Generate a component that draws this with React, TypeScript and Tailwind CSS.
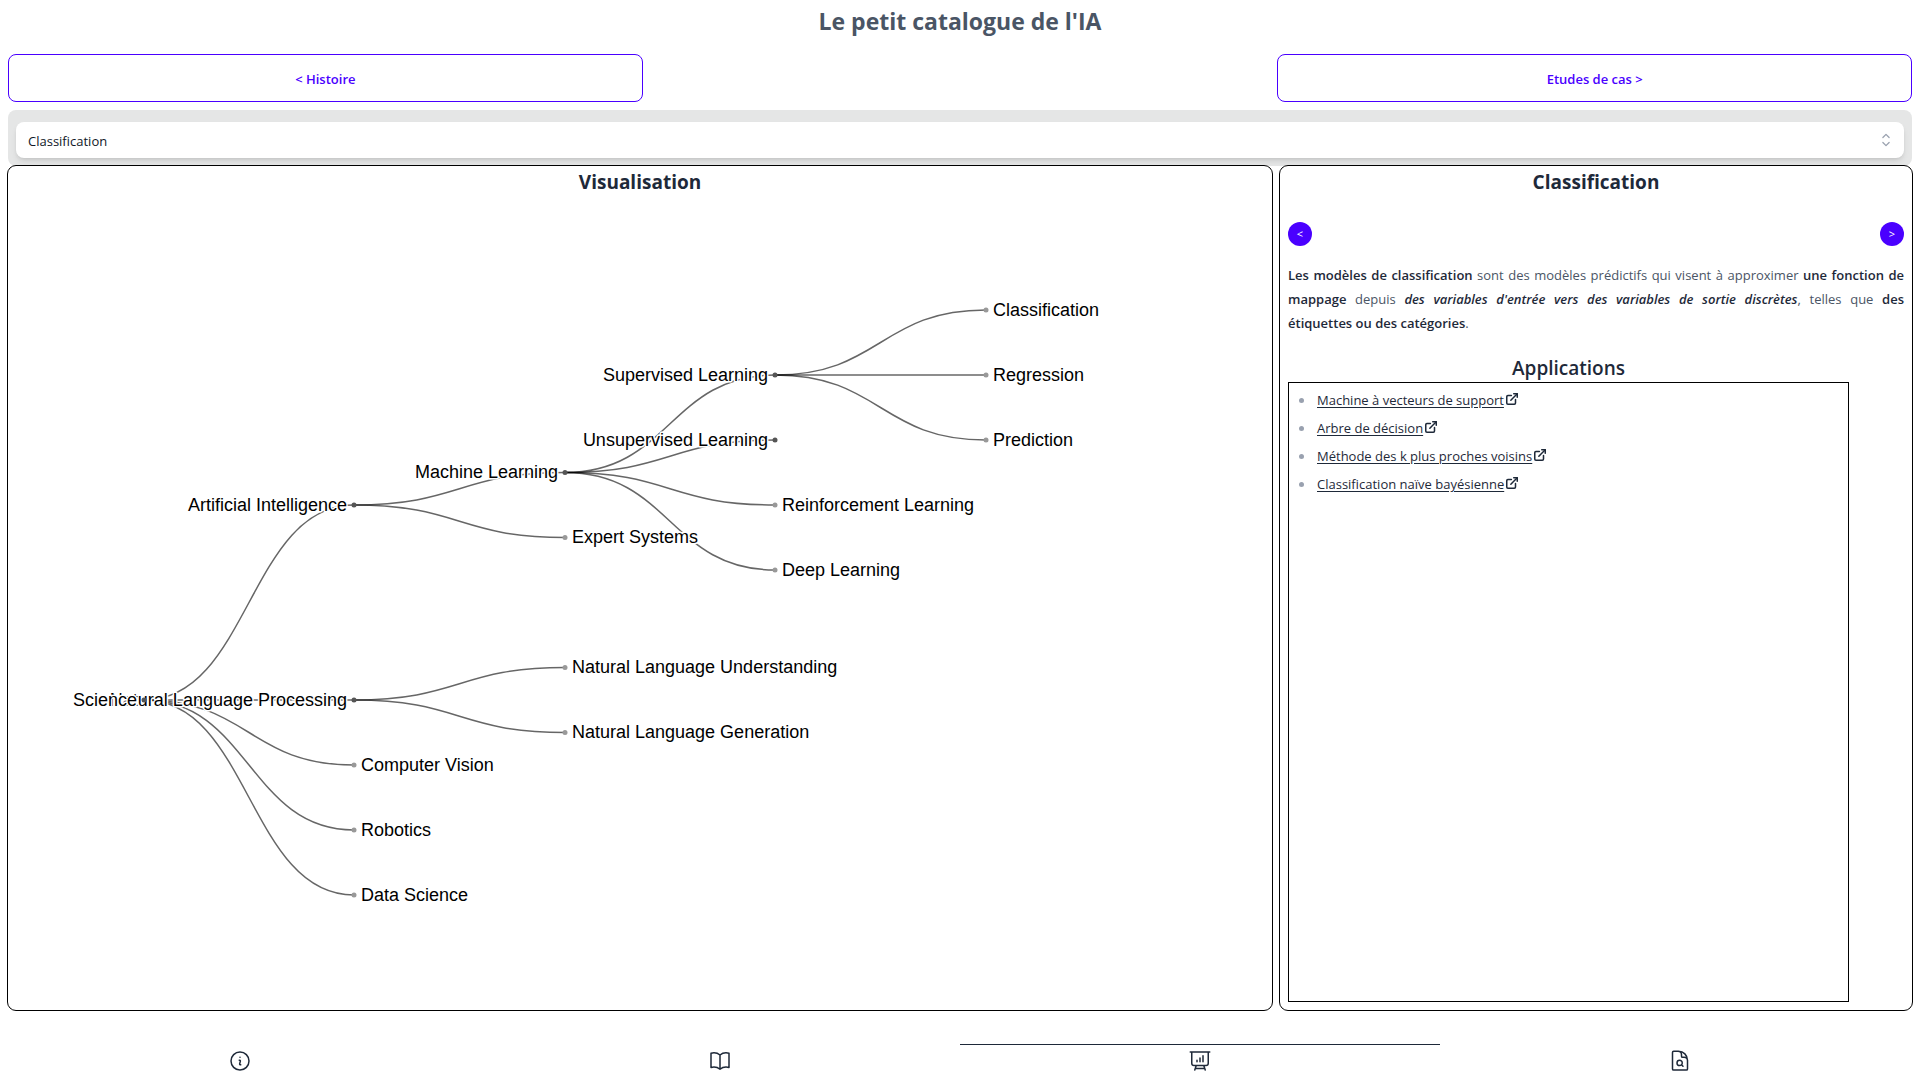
import React, { useState } from 'react';
import { ExternalLink } from 'lucide-react';
import {
  HiChevronUpDown,
  HiOutlineBookOpen,
  HiOutlineDocumentMagnifyingGlass,
  HiOutlineInformationCircle,
  HiOutlinePresentationChartBar,
} from 'react-icons/hi2';

type TreeNode = {
  id: string;
  label: string;
  x: number;
  y: number;
  parent?: string;
  branch?: boolean;
};

const COLUMNS = [136, 346, 557, 767, 978];

const NODES: TreeNode[] = [
  { id: 'root', label: 'Science', x: COLUMNS[0], y: 502, branch: true },
  { id: 'ai', label: 'Artificial Intelligence', x: COLUMNS[1], y: 307, parent: 'root', branch: true },
  { id: 'nlp', label: 'Natural Language Processing', x: COLUMNS[1], y: 502, parent: 'root', branch: true },
  { id: 'cv', label: 'Computer Vision', x: COLUMNS[1], y: 567, parent: 'root' },
  { id: 'robotics', label: 'Robotics', x: COLUMNS[1], y: 632, parent: 'root' },
  { id: 'data', label: 'Data Science', x: COLUMNS[1], y: 697, parent: 'root' },
  { id: 'ml', label: 'Machine Learning', x: COLUMNS[2], y: 274.5, parent: 'ai', branch: true },
  { id: 'expert', label: 'Expert Systems', x: COLUMNS[2], y: 339.5, parent: 'ai' },
  { id: 'nlu', label: 'Natural Language Understanding', x: COLUMNS[2], y: 469.5, parent: 'nlp' },
  { id: 'nlg', label: 'Natural Language Generation', x: COLUMNS[2], y: 534.5, parent: 'nlp' },
  { id: 'supervised', label: 'Supervised Learning', x: COLUMNS[3], y: 177, parent: 'ml', branch: true },
  { id: 'unsupervised', label: 'Unsupervised Learning', x: COLUMNS[3], y: 242, parent: 'ml', branch: true },
  { id: 'reinforcement', label: 'Reinforcement Learning', x: COLUMNS[3], y: 307, parent: 'ml' },
  { id: 'deep', label: 'Deep Learning', x: COLUMNS[3], y: 372, parent: 'ml' },
  { id: 'classification', label: 'Classification', x: COLUMNS[4], y: 112, parent: 'supervised' },
  { id: 'regression', label: 'Regression', x: COLUMNS[4], y: 177, parent: 'supervised' },
  { id: 'prediction', label: 'Prediction', x: COLUMNS[4], y: 242, parent: 'supervised' },
];

function linkPath(from: TreeNode, to: TreeNode) {
  const mid = (from.x + to.x) / 2;
  return `M${from.x},${from.y}C${mid},${from.y} ${mid},${to.y} ${to.x},${to.y}`;
}

function TopicTree() {
  const byId = new Map(NODES.map((n) => [n.id, n]));
  return (
    <svg
      viewBox="0 0 1264 812"
      className="h-0 w-full grow font-['Liberation_Sans',Arial,sans-serif] text-[18px]"
      role="img"
      aria-label="Arbre des domaines de l'IA"
    >
      <g fill="none" stroke="#000" strokeOpacity="0.6" strokeWidth="1.5">
        {NODES.filter((n) => n.parent).map((n) => (
          <path key={n.id} d={linkPath(byId.get(n.parent!)!, n)} />
        ))}
      </g>
      {[...NODES].reverse().map((n) => (
        <g key={n.id} transform={`translate(${n.x},${n.y})`}>
          <circle r="2.5" fill={n.branch ? '#555' : '#999'} />
          <text
            x={n.branch ? -7 : 7}
            dy="0.31em"
            textAnchor={n.branch ? 'end' : 'start'}
            fill="#000"
            stroke="#fff"
            strokeWidth="3"
            strokeLinejoin="round"
            paintOrder="stroke"
          >
            {n.label}
          </text>
        </g>
      ))}
    </svg>
  );
}

const TOPICS = ['Classification', 'Regression', 'Prediction', 'Reinforcement Learning', 'Deep Learning'];

const APPLICATIONS = [
  'Machine à vecteurs de support',
  'Arbre de décision',
  'Méthode des k plus proches voisins',
  'Classification naïve bayésienne',
];

const TABS = [
  { label: 'Informations', Icon: HiOutlineInformationCircle },
  { label: 'Histoire', Icon: HiOutlineBookOpen },
  { label: 'Visualisation', Icon: HiOutlinePresentationChartBar },
  { label: 'Etudes de cas', Icon: HiOutlineDocumentMagnifyingGlass },
];

const outlineButton =
  'h-12 rounded-lg border border-[#4a00ff] pt-1 text-[13px] font-semibold text-[#4a00ff]';
const roundButton =
  'flex size-6 items-center justify-center rounded-full bg-[#4a00ff] text-[11px] text-white';
const panel = 'flex flex-col rounded-lg outline outline-1 outline-black bg-white';

export default function App() {
  const [topic, setTopic] = useState('Classification');
  const [tab, setTab] = useState(2);

  return (
    <div className="flex min-h-screen flex-col bg-white font-['Open_Sans','Noto_Sans',sans-serif] text-gray-800">
      <h1 className="pt-[5px] pb-[9px] text-center text-[23px] leading-8 font-bold text-gray-600">
        Le petit catalogue de l'IA
      </h1>

      <div className="grid grid-cols-3 p-2">
        <button type="button" className={outlineButton}>
          &lt; Histoire
        </button>
        <button type="button" className={`${outlineButton} col-start-3`}>
          Etudes de cas &gt;
        </button>
      </div>

      <div className="mx-2 rounded-lg bg-[#e5e6e6] px-2 pt-3 pb-2">
        <div className="relative">
          <select
            aria-label="Sujet"
            value={topic}
            onChange={(e) => setTopic(e.target.value)}
            className="block h-9 w-full appearance-none rounded-lg bg-white px-3 pt-[3px] text-[13px] text-gray-900 shadow-md"
          >
            {TOPICS.map((t) => (
              <option key={t}>{t}</option>
            ))}
          </select>
          <HiChevronUpDown className="pointer-events-none absolute inset-y-0 right-2 my-auto size-5 text-gray-400" />
        </div>
      </div>

      <main className="mx-2 grid flex-1 grid-cols-[2fr_1fr] gap-2">
        <section className={panel}>
          <h2 className="text-center text-[19px] leading-8 font-bold">Visualisation</h2>
          <TopicTree />
        </section>

        <section className={`${panel} px-2 pb-2`}>
          <h2 className="text-center text-[19px] leading-8 font-bold">{topic}</h2>
          <div className="mt-6 flex justify-between">
            <button type="button" aria-label="Précédent" className={roundButton}>
              &lt;
            </button>
            <button type="button" aria-label="Suivant" className={roundButton}>
              &gt;
            </button>
          </div>
          <p className="mt-[17px] text-justify text-[13px] leading-6 text-gray-600">
            <strong className="font-semibold text-gray-800">Les modèles de classification</strong> sont des
            modèles prédictifs qui visent à approximer{' '}
            <strong className="font-semibold text-gray-800">une fonction de mappage</strong> depuis{' '}
            <strong className="font-semibold text-gray-800 italic">
              des variables d'entrée vers des variables de sortie discrètes
            </strong>
            , telles que{' '}
            <strong className="font-semibold text-gray-800">
              des <span className="whitespace-nowrap">étiquettes ou des catégories</span>
            </strong>
            .
          </p>
          <div className="mt-[19px] flex w-full max-w-[561px] flex-1 flex-col">
            <h3 className="text-center text-[19px] leading-7 font-semibold">Applications</h3>
            <ul className="flex-1 border border-black pt-[3px]">
              {APPLICATIONS.map((name) => (
                <li key={name} className="flex h-7 items-center pl-[10px]">
                  <span className="mr-[13px] size-[5px] rounded-full bg-gray-400" />
                  <a href="#" className="flex items-center text-[13px] leading-5 underline underline-offset-2">
                    {name}
                    <ExternalLink className="mb-0.5 ml-px size-[14px]" strokeWidth={2.6} />
                  </a>
                </li>
              ))}
            </ul>
          </div>
        </section>
      </main>

      <nav className="mt-[34px] grid h-9 grid-cols-4">
        {TABS.map(({ label, Icon }, i) => (
          <button
            key={label}
            type="button"
            aria-label={label}
            onClick={() => setTab(i)}
            className={
              i === tab
                ? 'flex items-center justify-center border-t border-gray-800 pb-1'
                : 'flex items-center justify-center border-t border-transparent pb-1'
            }
          >
            <Icon className="size-6" />
          </button>
        ))}
      </nav>
    </div>
  );
}
